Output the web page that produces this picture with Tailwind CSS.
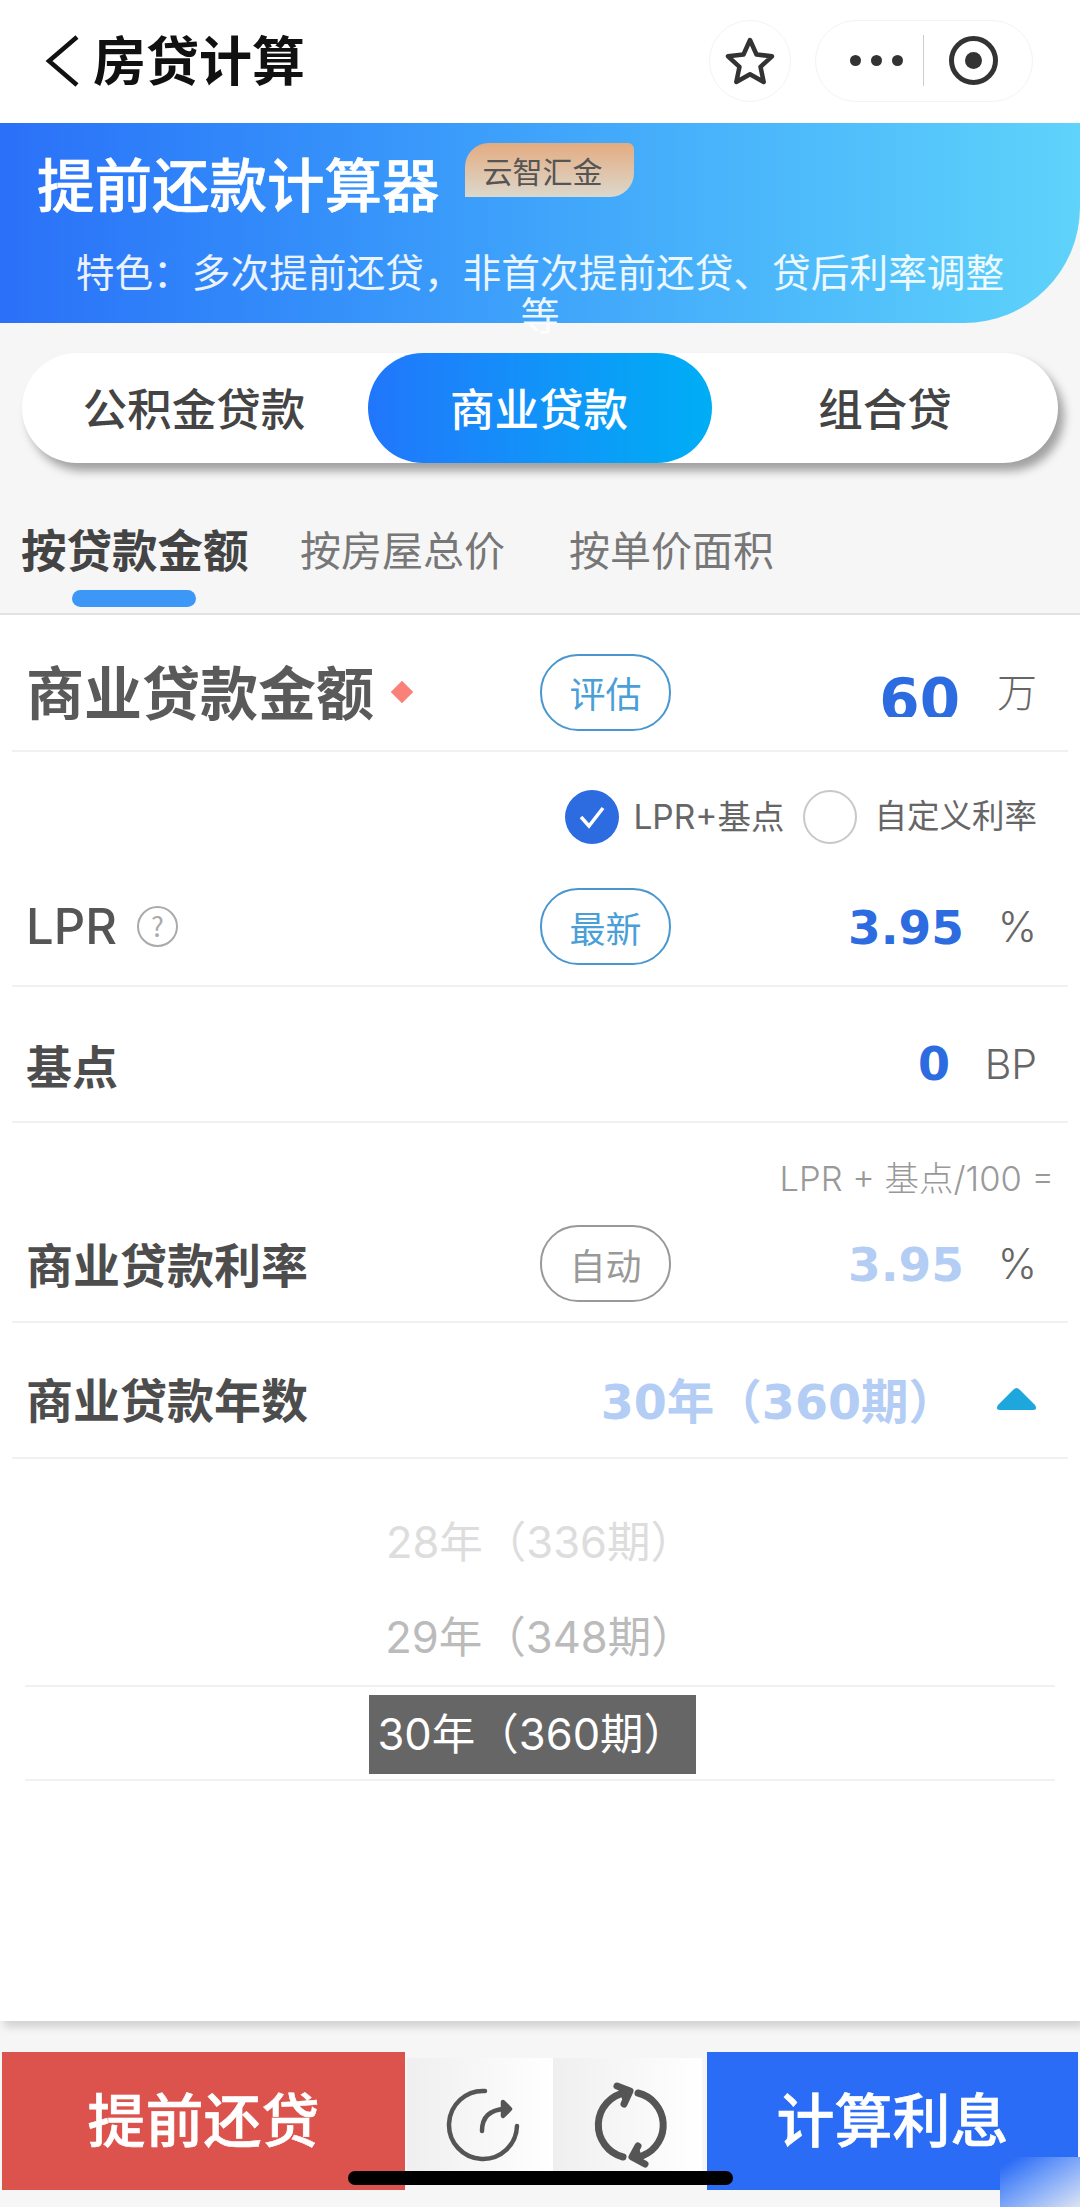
<!DOCTYPE html>
<html lang="zh-CN">
<head>
    <meta charset="UTF-8">
    <meta name="viewport" content="width=device-width, initial-scale=1.0">
    <title>房贷计算</title>
    <script src="https://cdn.jsdelivr.net/npm/@tailwindcss/browser@4"></script>
</head>
<body class="bg-[#f6f6f6] font-['Noto_Sans_CJK_SC','Noto_Sans',sans-serif]">
    <div class="relative w-[1080px] h-[2207px] overflow-hidden">

        <!-- Mini program nav bar -->
        <div class="h-[123px] bg-white flex items-center">
            <svg class="ml-[44px] w-[36px] h-[52px] mt-[-2px]" viewBox="0 0 36 52" fill="none" stroke="#111" stroke-width="4.5">
                <path d="M33 2 L5 26 L33 50"/>
            </svg>
            <span class="ml-[13px] text-[53px] leading-none font-bold text-[#111] mt-[-6px]">房贷计算</span>
            <div class="ml-auto mr-[47px] flex items-center gap-[24px] mt-[-2px]">
                <div class="w-[82px] h-[82px] rounded-full border border-[#f3f3f3] flex items-center justify-center">
                    <svg class="w-[50px] h-[48px]" viewBox="0 0 50 48" fill="none" stroke="#333" stroke-width="4.5" stroke-linejoin="round">
                        <path d="M25 3 L31.5 17.5 L47 19.3 L35.5 29.8 L38.7 45 L25 37.3 L11.3 45 L14.5 29.8 L3 19.3 L18.5 17.5 Z"/>
                    </svg>
                </div>
                <div class="w-[218px] h-[82px] rounded-full border border-[#f3f3f3] flex items-center">
                    <div class="ml-[34px] flex gap-[10px]">
                        <span class="w-[11px] h-[11px] rounded-full bg-[#333]"></span>
                        <span class="w-[11px] h-[11px] rounded-full bg-[#333]"></span>
                        <span class="w-[11px] h-[11px] rounded-full bg-[#333]"></span>
                    </div>
                    <span class="ml-[20px] w-px h-[51px] bg-[#ccc]"></span>
                    <div class="ml-[25px] w-[49px] h-[49px] rounded-full border-[5px] border-[#333] flex items-center justify-center">
                        <span class="w-[17px] h-[17px] rounded-full bg-[#333]"></span>
                    </div>
                </div>
            </div>
        </div>

        <!-- Banner -->
        <div class="h-[200px] bg-gradient-to-r from-[#2b70f8] to-[#5fd3fa] rounded-br-[116px] text-white">
            <div class="flex items-start pl-[37px] pt-[18px]">
                <span class="text-[57.5px] leading-[82px] font-medium [-webkit-text-stroke:0.6px_#fff]">提前还款计算器</span>
                <span class="ml-[25px] mt-[2px] w-[169px] h-[54px] bg-gradient-to-b from-[#e3ab80] to-[#dbd8cc] rounded-tl-[24px] rounded-tr-[6px] rounded-br-[24px] text-[#555] text-[30px] leading-[54px] pl-[18px]">云智汇金</span>
            </div>
            <p class="mt-[26px] px-[74px] text-center text-[38.7px] leading-[43px] text-white/90">特色&#xFF1A;多次提前还贷&#xFF0C;非首次提前还贷、贷后利率调整等</p>
        </div>

        <!-- Loan type switch -->
        <div class="mt-[30px] mx-[22px] h-[110px] rounded-full bg-white shadow-[6px_8px_10px_rgba(0,0,0,0.35)] flex items-center text-[44.5px] font-medium text-[#444]">
            <div class="w-[346px] text-center pb-[2px] pr-[2px]">公积金贷款</div>
            <div class="w-[344px] h-full rounded-full bg-gradient-to-r from-[#2176fb] to-[#00aef5] text-white flex items-center justify-center pb-[2px] pr-[2px]">商业贷款</div>
            <div class="flex-1 text-center pb-[2px]">组合贷</div>
        </div>

        <!-- Calculate-by tabs -->
        <div class="h-[152px] border-b-2 border-[#e2e2e2] relative">
            <div class="flex pl-[21px] pt-[57px] text-[41px] leading-[56px] text-[#777]">
                <span class="text-[45.5px] font-bold text-[#444] w-[279px]">按贷款金额</span>
                <span class="w-[269px]">按房屋总价</span>
                <span>按单价面积</span>
            </div>
            <div class="absolute left-[72px] bottom-[6px] w-[124px] h-[17px] rounded-full bg-[#3d97f7]"></div>
        </div>

        <!-- Form -->
        <div class="bg-white h-[1406px] shadow-[4px_6px_8px_rgba(0,0,0,0.15)]">
            <div class="mx-[12px] pl-[14px] pr-[31px] pt-[12px] h-[137px] border-b-2 border-[#f1f1f1] flex items-center">
                <div class="w-[514px] flex items-center mt-[2px]">
                    <span class="text-[58px] leading-none font-bold text-[#5a5a5a]">商业贷款金额</span>
                    <span class="ml-[20px] mt-[4px] w-[16px] h-[16px] rotate-45 bg-[#f98177] blur-[0.5px]"></span>
                </div>
                <div class="mt-[7px] w-[131px] h-[77px] rounded-[38px] border-[2.5px] border-[#4a97d0] text-[#4a9fd8] text-[36px] flex items-center justify-center">评估</div>
                <div class="mt-[6px] flex-1 h-[50px] overflow-hidden text-right text-[58px] leading-[67px] font-bold text-[#2c6be0] font-['DejaVu_Sans']">60</div>
                <div class="w-[77px] text-right text-[40px] leading-none font-light text-[#666] mt-[2px]">万</div>
            </div>

            <div class="mx-[12px] border-b-2 border-[#f1f1f1] h-[235px] pl-[14px] pr-[31px]">
                <div class="flex items-center justify-end pt-[38px] text-[32.5px] leading-[54px] text-[#666] font-['Inter','Noto_Sans_CJK_SC',sans-serif]">
                    <span class="w-[54px] h-[54px] rounded-full bg-[#2c6be0] flex items-center justify-center">
                        <svg class="w-[30px] h-[26px]" viewBox="0 0 30 26" fill="none" stroke="#fff" stroke-width="3.5">
                            <path d="M4 13 L12 22 L26 4"/>
                        </svg>
                    </span>
                    <span class="ml-[14px] text-[33.5px]">LPR+基点</span>
                    <span class="ml-[19px] w-[54px] h-[54px] rounded-full border-2 border-[#c8c8c8]"></span>
                    <span class="ml-[17px]">自定义利率</span>
                </div>
                <div class="flex items-center mt-[44px]">
                    <div class="w-[514px] flex items-center">
                        <span class="text-[49px] leading-none font-medium text-[#555] font-['Inter']">LPR</span>
                        <span class="ml-[20px] w-[41px] h-[41px] rounded-full border-2 border-[#aaa] text-[#aaa] text-[27px] flex items-center justify-center">?</span>
                    </div>
                    <div class="w-[131px] h-[77px] rounded-[38px] border-[2.5px] border-[#4a97d0] text-[#4a9fd8] text-[36px] flex items-center justify-center">最新</div>
                    <div class="flex-1 text-right text-[47px] leading-none font-bold text-[#2c6be0] font-['DejaVu_Sans'] mt-[2px]">3.95</div>
                    <div class="w-[73px] text-right text-[42px] leading-none font-light text-[#666] font-['Inter']">%</div>
                </div>
            </div>

            <div class="mx-[12px] pl-[14px] pr-[31px] pt-[20px] h-[136px] border-b-2 border-[#f1f1f1] flex items-center">
                <span class="text-[46px] leading-none font-bold text-[#4d4d4d]">基点</span>
                <div class="flex-1 text-right text-[46px] leading-none font-bold text-[#2c6be0] font-['DejaVu_Sans'] pr-[14px]">0</div>
                <div class="w-[73px] text-right text-[41px] leading-none font-light text-[#666] font-['Inter']">BP</div>
            </div>

            <div class="mx-[12px] pl-[14px] pr-[31px] h-[200px] border-b-2 border-[#f1f1f1]">
                <div class="pt-[38px] mr-[-17px] text-right text-[34.5px] leading-[36px] font-light text-[#999] font-['Inter','Noto_Sans_CJK_SC',sans-serif]">LPR + 基点/100 =</div>
                <div class="flex items-center mt-[28px]">
                    <span class="w-[514px] mt-[-3px] text-[47px] leading-none font-bold text-[#4d4d4d]">商业贷款利率</span>
                    <div class="w-[131px] h-[77px] rounded-[38px] border-[2.5px] border-[#999] text-[#999] text-[36px] flex items-center justify-center">自动</div>
                    <div class="flex-1 text-right text-[47px] leading-none font-bold text-[#b3cdf5] font-['DejaVu_Sans'] mt-[2px]">3.95</div>
                    <div class="w-[73px] text-right text-[42px] leading-none font-light text-[#666] font-['Inter']">%</div>
                </div>
            </div>

            <div class="mx-[12px] pl-[14px] pr-[31px] pt-[14px] h-[136px] border-b-2 border-[#f1f1f1] flex items-center">
                <span class="text-[47px] leading-none font-bold text-[#4d4d4d]">商业贷款年数</span>
                <div class="ml-auto mt-[12px] text-[47.5px] leading-none font-bold text-[#b3cdf5] font-['DejaVu_Sans','Noto_Sans_CJK_SC',sans-serif]">30年&#xFF08;360期&#xFF09;</div>
                <svg class="ml-[40px] mt-[4px] w-[41px] h-[24px]" viewBox="0 0 41 24" fill="#1ea7dd">
                    <path d="M20.5 1 Q22 1 24 3 L39 18 Q42 23 37 23 L4 23 Q-1 23 2 18 L17 3 Q19 1 20.5 1 Z"/>
                </svg>
            </div>

            <!-- Year picker -->
            <div class="mx-[25px] pt-[36px] text-center text-[43.5px] leading-[95px] text-[#bbb] font-['Inter','Noto_Sans_CJK_SC',sans-serif]">
                <div class="text-[#ddd]">28年&#xFF08;336期&#xFF09;</div>
                <div>29年&#xFF08;348期&#xFF09;</div>
                <div class="h-[96px] border-y-2 border-[#f1f1f1] flex justify-center pt-[8px]">
                    <span class="ml-[-16px] w-[327px] h-[79px] bg-[#666] text-white text-left pl-[9px] leading-[79px] whitespace-nowrap">30年&#xFF08;360期&#xFF09;</span>
                </div>
            </div>
        </div>

        <!-- Bottom action bar -->
        <div class="mt-[31px] h-[138px] flex text-white text-[58px] font-medium [-webkit-text-stroke:0.6px_#fff] px-[2px]">
            <div class="w-[403px] bg-[#dc524d] flex items-center justify-center pb-[8px]">提前还贷</div>
            <div class="ml-[2px] mt-[6px] h-[125px] w-[146px] bg-gradient-to-r from-[#efefef] to-white flex items-center justify-center pt-[8px] pl-[6px]">
                <svg class="w-[80px] h-[80px]" viewBox="0 0 80 80" fill="none" stroke="#555" stroke-width="4.5" stroke-linecap="round" stroke-linejoin="round">
                    <path d="M42 6 A34 34 0 1 0 74 41"/>
                    <path d="M39 46 Q39 25 62 24"/>
                    <path d="M60 17 L67 24 L60 31 Z" fill="#555"/>
                </svg>
            </div>
            <div class="h-[125px] mt-[6px] w-[149px] bg-gradient-to-r from-[#efefef] to-white flex items-center justify-center pt-[8px] pl-[5px]">
                <svg class="w-[84px] h-[88px]" viewBox="0 0 84 88" fill="none" stroke="#555" stroke-width="7" stroke-linecap="round" stroke-linejoin="round">
                    <path d="M50 12 A33 33 0 0 1 55 74.5"/>
                    <path d="M35 76 A33 33 0 0 1 38 11.5"/>
                    <path d="M29 5 L42 10 L36 23" fill="#555"/>
                    <path d="M57 83 L44 76 L50 65" fill="#555"/>
                </svg>
            </div>
            <div class="ml-[5px] flex-1 bg-[#2b6cf6] flex items-center justify-center pb-[8px]">计算利息</div>
        </div>

        <!-- Home indicator -->
        <div class="absolute left-[348px] top-[2171px] w-[385px] h-[14px] rounded-full bg-black"></div>
        <!-- Pale patch over the bottom right corner -->
        <div class="absolute left-[1000px] top-[2157px] w-[80px] h-[50px] bg-gradient-to-br from-[#2b6cf6] from-[10%] to-[#dde3f2]"></div>
    </div>
</body>
</html>
